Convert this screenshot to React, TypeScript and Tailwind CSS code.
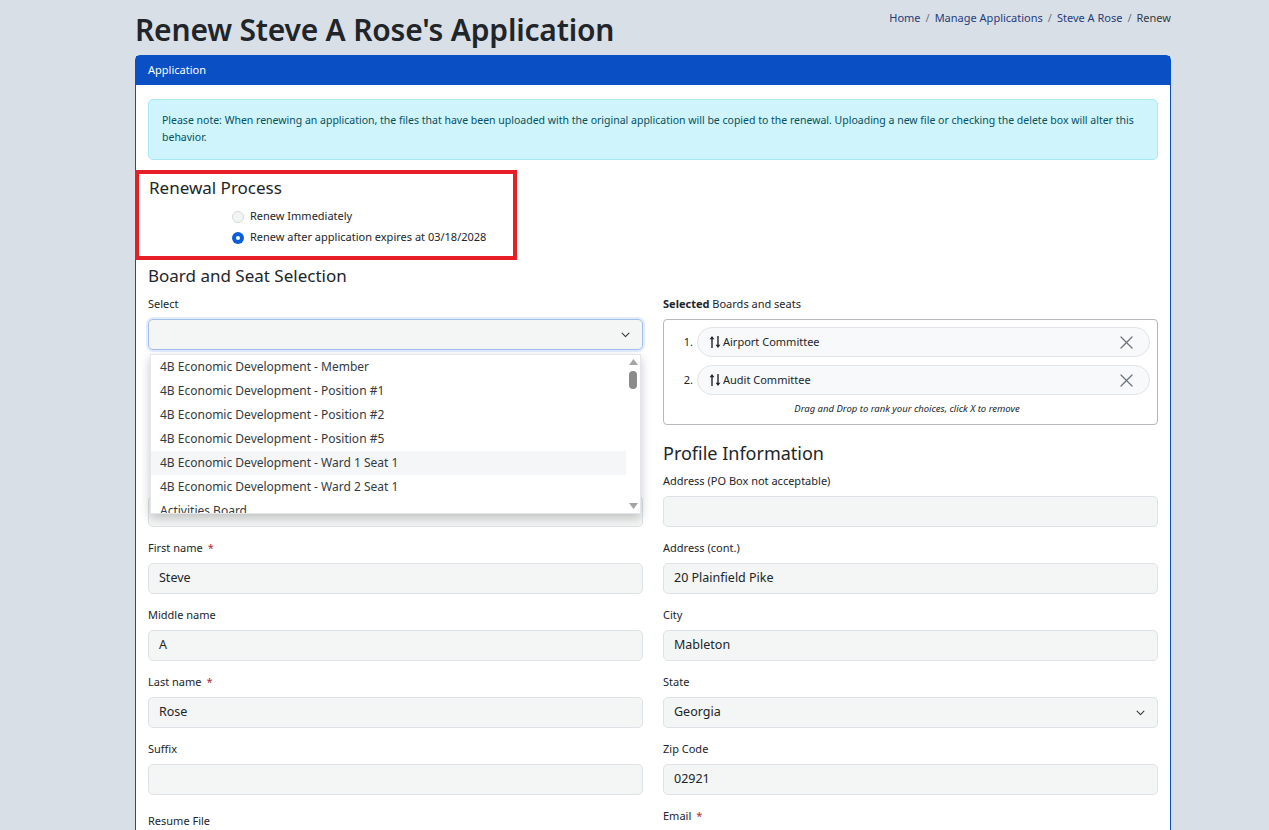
import React from 'react';

const options = [
  '4B Economic Development - Member',
  '4B Economic Development - Position #1',
  '4B Economic Development - Position #2',
  '4B Economic Development - Position #5',
  '4B Economic Development - Ward 1 Seat 1',
  '4B Economic Development - Ward 2 Seat 1',
  'Activities Board',
];

const selected = ['Airport Committee', 'Audit Committee'];

const Chevron: React.FC = () => (
  <svg width="11" height="11" viewBox="0 0 16 16" fill="none" stroke="#343a40" strokeWidth="1.6" strokeLinecap="round" strokeLinejoin="round">
    <path d="M3 6l5 5 5-5" />
  </svg>
);

const Label: React.FC<{ text: string; required?: boolean; className?: string }> = ({ text, required, className = '' }) => (
  <div className={`h-[15px] mb-[8px] text-[11px] leading-[15px] text-[#212529] ${className}`}>
    {text}
    {required && <span className="ml-[5px] text-[#b02a37]">*</span>}
  </div>
);

const Input: React.FC<{ value?: string }> = ({ value = '' }) => (
  <div className="h-[31px] rounded-[5px] border border-[#dee2e6] bg-[#f3f6f4] px-[10px] flex items-center text-[12.5px] text-[#212529]">
    {value}
  </div>
);

const Field: React.FC<{ label: string; value?: string; required?: boolean; select?: boolean }> = ({ label, value, required, select }) => (
  <div className="mb-[13px]">
    <Label text={label} required={required} />
    {select ? (
      <div className="h-[31px] rounded-[5px] border border-[#dee2e6] bg-[#f3f6f4] pl-[10px] pr-[11px] flex items-center justify-between text-[12.5px] text-[#212529]">
        <span>{value}</span>
        <Chevron />
      </div>
    ) : (
      <Input value={value} />
    )}
  </div>
);

const Radio: React.FC<{ checked?: boolean; label: string }> = ({ checked, label }) => (
  <div className="flex items-center h-[21px]">
    {checked ? (
      <span className="w-[12px] h-[12px] rounded-full bg-[#0b5ed7] flex items-center justify-center">
        <span className="w-[4px] h-[4px] rounded-full bg-white" />
      </span>
    ) : (
      <span className="w-[12px] h-[12px] rounded-full border border-[#d5d9dc] bg-[#f3f5f4]" />
    )}
    <span className="ml-[6px] text-[11px] text-[#212529]">{label}</span>
  </div>
);

const SortIcon: React.FC = () => (
  <svg width="12" height="14" viewBox="0 0 12 14" fill="#212529">
    <path d="M3 1L0.6 4.2h1.7V13h1.4V4.2h1.7z" />
    <path d="M9 13l2.4-3.2H9.7V1H8.3v8.8H6.6z" />
  </svg>
);

const CloseIcon: React.FC = () => (
  <svg width="13" height="13" viewBox="0 0 13 13" stroke="#6c757d" strokeWidth="1.3" strokeLinecap="round">
    <path d="M1 1l11 11M12 1L1 12" />
  </svg>
);

export default function App() {
  return (
    <div className="min-h-screen bg-[#d9dfe6] font-['Noto_Sans','Open_Sans',sans-serif] text-[#212529] overflow-hidden">
      <div className="ml-[135px] w-[1036px]">
        {/* Header */}
        <div className="flex items-start justify-between h-[55px]">
          <h1 className="mt-[10px] text-[30px] leading-[40px] font-semibold text-[#212529] tracking-[-0.2px]">
            Renew Steve A Rose's Application
          </h1>
          <nav className="mt-[10px] flex items-center text-[11px] leading-[16px]">
            <span className="text-[#1f3d7a]">Home</span>
            <span className="mx-[5px] text-[#6c757d]">/</span>
            <span className="text-[#1f3d7a]">Manage Applications</span>
            <span className="mx-[5px] text-[#6c757d]">/</span>
            <span className="text-[#1f3d7a]">Steve A Rose</span>
            <span className="mx-[5px] text-[#6c757d]">/</span>
            <span className="text-[#343a40]">Renew</span>
          </nav>
        </div>

        {/* Card */}
        <div className="rounded-t-[5px] border border-[#0a50c4] bg-white">
          <div className="h-[29px] bg-[#0a50c4] px-[12px] flex items-center text-[11px] text-white">Application</div>

          <div className="px-[12px] pt-[14px] pb-[40px]">
            <div className="h-[61px] rounded-[5px] border border-[#a6e9f5] bg-[#cff4fc] px-[13px] pt-[12px] text-[10.5px] leading-[17px] text-[#055160]">
              Please note: When renewing an application, the files that have been uploaded with the original application will be copied to the renewal. Uploading a new file or checking the delete box will alter this behavior.
            </div>

            {/* Renewal process */}
            <div className="-ml-[13px] mt-[10px] w-[382px] h-[90px] border-4 border-[#e61e27] pl-[10px] pt-[2px]">
              <h2 className="text-[17px] leading-[24px] text-[#212529]">Renewal Process</h2>
              <div className="ml-[83px] mt-[6px]">
                <Radio label="Renew Immediately" />
                <Radio checked label="Renew after application expires at 03/18/2028" />
              </div>
            </div>

            <h2 className="mt-[4px] text-[17px] leading-[24px] text-[#212529]">Board and Seat Selection</h2>

            <div className="grid grid-cols-2 gap-x-[20px]">
              {/* Select */}
              <div className="pt-[8px]">
                <div className="h-[15px] mb-[8px] text-[11px] leading-[15px]">Select</div>
                <div className="relative">
                  <div className="h-[31px] rounded-[5px] border border-[#a3bff0] bg-[#f3f6f4] shadow-[0_0_0_2px_rgba(13,110,253,0.12)] flex items-center justify-end pr-[11px]">
                    <Chevron />
                  </div>
                  <div className="absolute z-10 left-[2px] top-[35px] w-[491px] h-[160px] bg-white border border-[#e3e6ea] shadow-[0_4px_10px_rgba(0,0,0,0.22)] flex overflow-hidden">
                    <div className="flex-1">
                      {options.map((o, i) => (
                        <div
                          key={o}
                          className={`h-[24px] pl-[9px] flex items-center text-[12px] text-[#343a40] ${i === 4 ? 'bg-[#f5f6f8]' : ''}`}
                        >
                          {o}
                        </div>
                      ))}
                    </div>
                    <div className="w-[14px] flex flex-col items-center pt-[4px] pb-[4px]">
                      <svg width="9" height="6" viewBox="0 0 9 6" fill="#a3a3a3"><path d="M4.5 0L9 6H0z" /></svg>
                      <div className="mt-[6px] w-[8px] h-[18px] rounded-full bg-[#8a8a8a]" />
                      <div className="flex-1" />
                      <svg width="9" height="6" viewBox="0 0 9 6" fill="#a3a3a3"><path d="M0 0h9L4.5 6z" /></svg>
                    </div>
                  </div>
                </div>
              </div>

              {/* Selected */}
              <div className="pt-[8px]">
                <div className="h-[15px] mb-[8px] text-[11px] leading-[15px]">
                  <span className="font-bold">Selected</span> Boards and seats
                </div>
                <div className="rounded-[4px] border border-[#b4b8bc] pt-[7px] pr-[7px] pb-[8px]">
                  {selected.map((s, i) => (
                    <div key={s} className="flex items-center mb-[8px]">
                      <div className="w-[33px] pr-[4px] text-right text-[11px]">{i + 1}.</div>
                      <div className="flex-1 h-[30px] rounded-full border border-[#e1e4e8] bg-[#f8f9fa] pl-[11px] pr-[16px] flex items-center justify-between">
                        <div className="flex items-center text-[11px]">
                          <SortIcon />
                          <span className="ml-[2px]">{s}</span>
                        </div>
                        <CloseIcon />
                      </div>
                    </div>
                  ))}
                  <div className="text-center text-[9.5px] italic leading-[14px] -mt-[1px]">
                    Drag and Drop to rank your choices, click X to remove
                  </div>
                </div>
              </div>

              {/* Section headings (left one is hidden behind the open list) */}
              <div className="mt-[16px] mb-[8px] h-[24px]" />
              <h2 className="mt-[16px] mb-[8px] text-[18px] leading-[24px]">Profile Information</h2>

              <div className="mb-[13px]">
                <div className="h-[15px] mb-[8px]" />
                <Input />
              </div>
              <Field label="Address (PO Box not acceptable)" />

              <Field label="First name" required value="Steve" />
              <Field label="Address (cont.)" value="20 Plainfield Pike" />

              <Field label="Middle name" value="A" />
              <Field label="City" value="Mableton" />

              <Field label="Last name" required value="Rose" />
              <Field label="State" value="Georgia" select />

              <Field label="Suffix" />
              <Field label="Zip Code" value="02921" />

              <div className="pt-[5px]">
                <Label text="Resume File" />
                <Input />
              </div>
              <div>
                <Label text="Email" required />
                <Input value="steve.rose@example.com" />
              </div>
            </div>
          </div>
        </div>
      </div>
    </div>
  );
}
